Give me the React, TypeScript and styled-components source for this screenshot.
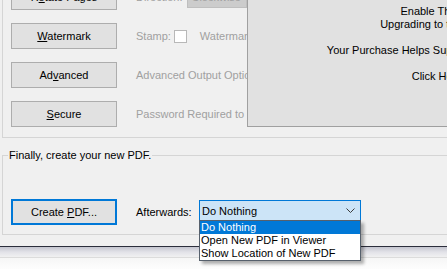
import React from "react";
import styled, { createGlobalStyle } from "styled-components";

const GlobalStyle = createGlobalStyle`
  html, body {
    margin: 0;
    padding: 0;
    overflow: hidden;
    background: #fbfbfb;
  }
  body {
    font-family: "Liberation Sans", Arial, sans-serif;
    font-size: 11px;
    color: #000;
  }
`;

const Screen = styled.div`
  width: 447px;
  height: 269px;
  overflow: hidden;
  display: flex;
  flex-direction: column;
`;

const Window = styled.div`
  flex: none;
  width: 720px;
  height: 247px;
  box-sizing: border-box;
  display: flex;
  flex-direction: column;
  padding-left: 2px;
  background: #f0f0f0;
  border-bottom: 1px solid #2c2e3c;
`;

const Below = styled.div`
  flex: 1;
  background: linear-gradient(
    to bottom,
    #c4c5cf 0px,
    #e2e2e8 5px,
    #eeeef0 9px,
    #f0f0f0 10px,
    #dcdcdc 10px,
    #dcdcdc 11px,
    #f6f6f6 11px,
    #fdfdfd 100%
  );
`;

const OptionsGroup = styled.div`
  margin-top: -17px;
  border: 1px solid #d5d5d5;
  display: grid;
  grid-template-columns: 106px 130px 454px;
  grid-template-rows: repeat(4, 26px);
  row-gap: 13px;
  padding: 0 0 10px 8px;
`;

const Button = styled.button<{ $default?: boolean }>`
  box-sizing: border-box;
  width: 106px;
  height: 26px;
  padding: 0;
  font-family: inherit;
  font-size: 11px;
  color: #000;
  background: #e1e1e1;
  border: 1px solid ${(p) => (p.$default ? "#0078d7" : "#adadad")};
  box-shadow: ${(p) => (p.$default ? "inset 0 0 0 1px #0078d7" : "none")};
  flex: none;
`;

const OptionCell = styled.div`
  display: flex;
  align-items: center;
  padding-left: 19px;
  overflow: hidden;
  white-space: nowrap;
  color: #a0a0a0;
`;

const DisabledSelect = styled.div`
  flex: none;
  box-sizing: border-box;
  width: 60px;
  height: 21px;
  margin-left: 5px;
  padding-left: 3px;
  line-height: 19px;
  background: #cccccc;
  border: 1px solid #bfbfbf;
  color: #a0a0a0;
`;

const Checkbox = styled.span`
  flex: none;
  box-sizing: border-box;
  width: 13px;
  height: 13px;
  margin: 0 13px 0 3px;
  background: #fff;
  border: 1px solid #b8b8b8;
`;

const Panel = styled.div`
  grid-column: 3;
  grid-row: 1 / span 4;
  box-sizing: border-box;
  padding-top: 20px;
  background: #e1e1e1;
  border: 1px solid #a0a0a0;
`;

const PanelLine = styled.div<{ $gap?: boolean }>`
  line-height: 13px;
  text-align: center;
  white-space: nowrap;
  margin-top: ${(p) => (p.$gap ? "13px" : "0")};
`;

const FinalGroup = styled.fieldset`
  margin: 11px 0 0 0;
  padding: 0;
  min-width: 0;
  border: 1px solid #d5d5d5;
`;

const Caption = styled.legend`
  margin-left: 5px;
  padding: 0 1px;
  line-height: 13px;
`;

const FinalRow = styled.div`
  display: flex;
  align-items: center;
  padding: 37px 0 9px 8px;
`;

const Label = styled.span`
  flex: none;
  width: 63px;
  margin-left: 19px;
`;

const Combo = styled.div`
  position: relative;
  box-sizing: border-box;
  width: 162px;
  height: 21px;
  margin-bottom: 3px;
  display: flex;
  align-items: center;
  justify-content: space-between;
  padding: 0 5px 0 2px;
  background: #cce4f7;
  border: 1px solid #0078d7;
`;

const DropList = styled.div`
  position: absolute;
  top: 100%;
  left: -1px;
  z-index: 10;
  box-sizing: border-box;
  width: 162px;
  background: #fff;
  border: 1px solid #56606c;
  box-shadow: 3px 3px 3px rgba(0, 0, 0, 0.3);
`;

const DropItem = styled.div<{ $selected?: boolean }>`
  height: 13px;
  line-height: 13px;
  padding-left: 1px;
  white-space: nowrap;
  background: ${(p) => (p.$selected ? "#0078d7" : "#fff")};
  color: ${(p) => (p.$selected ? "#fff" : "#000")};
`;

const Chevron = () => (
  <svg width="9" height="5" viewBox="0 0 9 5">
    <path d="M0.5 0.5 L4.5 4.5 L8.5 0.5" stroke="#3c3c3c" fill="none" />
  </svg>
);

const options = [
  "Do Nothing",
  "Open New PDF in Viewer",
  "Show Location of New PDF",
];

const App: React.FC = () => {
  return (
    <Screen>
      <GlobalStyle />
      <Window>
        <OptionsGroup>
          <Panel>
            <PanelLine>Enable The Extra Features By</PanelLine>
            <PanelLine>Upgrading to the Professional Version.</PanelLine>
            <PanelLine $gap>
              Your Purchase Helps Support Continued Free Development.
            </PanelLine>
            <PanelLine $gap>Click Here To Learn More</PanelLine>
          </Panel>

          <Button>
            R<u>o</u>tate Pages
          </Button>
          <OptionCell>
            Direction:
            <DisabledSelect>Clockwise</DisabledSelect>
          </OptionCell>

          <Button>
            <u>W</u>atermark
          </Button>
          <OptionCell>
            Stamp:
            <Checkbox />
            Watermark Text
          </OptionCell>

          <Button>
            Ad<u>v</u>anced
          </Button>
          <OptionCell>Advanced Output Options</OptionCell>

          <Button>
            <u>S</u>ecure
          </Button>
          <OptionCell>Password Required to Open</OptionCell>
        </OptionsGroup>

        <FinalGroup>
          <Caption>Finally, create your new PDF.</Caption>
          <FinalRow>
            <Button $default>
              Create <u>P</u>DF...
            </Button>
            <Label>Afterwards:</Label>
            <Combo>
              <span>Do Nothing</span>
              <Chevron />
              <DropList>
                {options.map((o, i) => (
                  <DropItem key={o} $selected={i === 0}>
                    {o}
                  </DropItem>
                ))}
              </DropList>
            </Combo>
          </FinalRow>
        </FinalGroup>
      </Window>
      <Below />
    </Screen>
  );
};

export default App;
